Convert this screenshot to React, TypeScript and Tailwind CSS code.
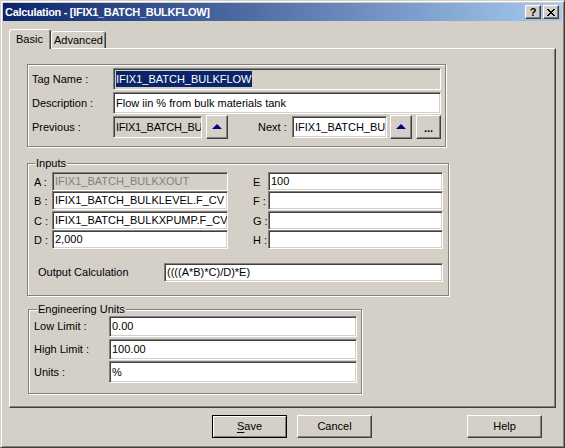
import React from "react";

const sunken =
  "border border-t-[#808080] border-l-[#808080] border-b-white border-r-white shadow-[inset_1px_1px_0_#404040,inset_-1px_-1px_0_#d4d0c8]";
const raised =
  "border border-t-white border-l-white border-b-[#404040] border-r-[#404040] shadow-[inset_-1px_-1px_0_#808080]";

function Field({
  w,
  h,
  value,
  disabled,
  className = "",
}: {
  w: string;
  h: string;
  value?: React.ReactNode;
  disabled?: boolean;
  className?: string;
}) {
  return (
    <div
      className={`${sunken} ${w} ${h} ${
        disabled ? "bg-[#d4d0c8] text-[#808080]" : "bg-white text-black"
      } flex items-center pl-[2px] overflow-hidden whitespace-nowrap shrink-0 ${className}`}
    >
      {value}
    </div>
  );
}

function UpButton({ className = "" }: { className?: string }) {
  return (
    <div
      className={`${raised} bg-[#d4d0c8] w-[22px] h-[24px] flex items-center justify-center shrink-0 ${className}`}
    >
      <svg width="10" height="5" viewBox="0 0 10 5" className="mb-[2px]">
        <polygon points="5,0 10,5 0,5" fill="#000080" />
      </svg>
    </div>
  );
}

function Group({
  label,
  labelLeft = "left-[7px]",
  className = "",
  children,
}: {
  label?: string;
  labelLeft?: string;
  className?: string;
  children: React.ReactNode;
}) {
  return (
    <div
      className={`relative border border-[#808080] shadow-[inset_1px_1px_0_#fff,1px_1px_0_#fff] shrink-0 ${className}`}
    >
      {label && (
        <span
          className={`absolute top-[-8px] ${labelLeft} bg-[#d4d0c8] px-[1px] leading-[14px]`}
        >
          {label}
        </span>
      )}
      {children}
    </div>
  );
}

function CloseGlyph() {
  const rows = [
    "XX....XX",
    ".XX..XX.",
    "..XXXX..",
    "...XX...",
    "..XXXX..",
    ".XX..XX.",
    "XX....XX",
  ];
  return (
    <svg width="8" height="7" viewBox="0 0 8 7" shapeRendering="crispEdges">
      {rows.flatMap((r, y) =>
        r.split("").map((c, x) =>
          c === "X" ? <rect key={`${x}-${y}`} x={x} y={y} width="1" height="1" fill="#000" /> : null
        )
      )}
    </svg>
  );
}

function PushButton({
  children,
  isDefault,
  className = "",
}: {
  children: React.ReactNode;
  isDefault?: boolean;
  className?: string;
}) {
  const cls = isDefault
    ? "border border-black shadow-[inset_1px_1px_0_#fff,inset_-1px_-1px_0_#808080]"
    : raised;
  return (
    <div
      className={`${cls} bg-[#d4d0c8] w-[75px] h-[23px] flex items-center justify-center shrink-0 ${className}`}
    >
      {children}
    </div>
  );
}

export default function App() {
  return (
    <div className="w-[565px] h-[448px] bg-[#d4d0c8] border border-t-[#d4d0c8] border-l-[#d4d0c8] border-b-[#404040] border-r-[#404040] shadow-[inset_1px_1px_0_#fff,inset_-1px_-1px_0_#808080] p-[2px] font-['Liberation_Sans',Arial,sans-serif] text-[11px] text-black leading-[13px] flex flex-col overflow-hidden select-none">
      {/* Title bar */}
      <div className="h-[18px] w-[559px] bg-[linear-gradient(to_right,#0a246a,#a6caf0)] flex items-center pl-[2px] pr-[3px] shrink-0">
        <span className="flex-1 text-white font-bold tracking-[-0.3px] whitespace-nowrap">
          Calculation - [IFIX1_BATCH_BULKFLOW]
        </span>
        <div className={`${raised} bg-[#d4d0c8] w-[16px] h-[14px] flex items-center justify-center mr-[2px] font-bold text-[11px] leading-[11px]`}>
          ?
        </div>
        <div className={`${raised} bg-[#d4d0c8] w-[16px] h-[14px] flex items-center justify-center`}>
          <CloseGlyph />
        </div>
      </div>

      {/* Tabs */}
      <div className="ml-[6px] mt-[8px] h-[20px] flex items-start shrink-0">
        <div className="relative z-10 w-[42px] h-[20px] bg-[#d4d0c8] border-t border-l border-r border-t-white border-l-white border-r-[#404040] shadow-[inset_-1px_0_0_#808080] rounded-t-[3px] flex items-center pl-[6px] pb-[1px]">
          Basic
        </div>
        <div className="mt-[2px] w-[55px] h-[17px] bg-[#d4d0c8] border-t border-l border-r border-t-white border-l-white border-r-[#404040] shadow-[inset_-1px_0_0_#808080] rounded-t-[3px] flex items-center pl-[2px] pt-[1px]">
          Advanced
        </div>
      </div>

      {/* Panel */}
      <div
        className={`ml-[6px] mt-[-1px] w-[547px] h-[360px] ${raised} bg-[#d4d0c8] flex flex-col shrink-0`}
      >
        {/* Tag group */}
        <Group className="ml-[17px] mt-[15px] w-[419px] h-[83px]">
          <div className="pt-[3px] pl-[4px] flex flex-col gap-[2px]">
            <div className="flex items-center h-[22px]">
              <span className="w-[81px] shrink-0">Tag Name :</span>
              <Field
                w="w-[328px]"
                h="h-[22px]"
                disabled
                value={
                  <span className="bg-[#0a246a] text-white h-[16px] leading-[16px] inline-block">
                    IFIX1_BATCH_BULKFLOW
                  </span>
                }
              />
            </div>
            <div className="flex items-center h-[22px]">
              <span className="w-[81px] shrink-0">Description :</span>
              <Field w="w-[328px]" h="h-[22px]" value="Flow iin % from bulk materials tank" />
            </div>
            <div className="flex items-center h-[22px]">
              <span className="w-[81px] shrink-0">Previous :</span>
              <Field
                w="w-[89px]"
                h="h-[22px]"
                disabled
                className="!text-black tracking-[-0.3px]"
                value="IFIX1_BATCH_BU"
              />
              <UpButton className="ml-[4px]" />
              <span className="ml-[30px] w-[34px] shrink-0">Next :</span>
              <Field w="w-[95px]" h="h-[22px]" value="IFIX1_BATCH_BU" />
              <UpButton className="ml-[3px]" />
              <div
                className={`${raised} bg-[#d4d0c8] ml-[4px] w-[25px] h-[24px] flex items-center justify-center font-bold pt-[2px] leading-[11px] shrink-0`}
              >
                ...
              </div>
            </div>
          </div>
        </Group>

        {/* Inputs group */}
        <Group label="Inputs" labelLeft="left-[7px]" className="ml-[17px] mt-[16px] w-[422px] h-[133px]">
          <div className="pt-[8px] pl-[6px] flex flex-col">
            {[
              ["A :", "IFIX1_BATCH_BULKXOUT", true, "E", "100", ""],
              ["B :", "IFIX1_BATCH_BULKLEVEL.F_CV", false, "F :", "", ""],
              ["C :", "IFIX1_BATCH_BULKXPUMP.F_CV", false, "G :", "", "mt-[1px]"],
              ["D :", "2,000", false, "H :", "", ""],
            ].map(([l, v, dis, l2, v2, mt]) => (
              <div key={l as string} className={`flex items-center h-[19px] ${mt}`}>
                <span className="w-[18px] shrink-0 pt-[2px]">{l}</span>
                <Field w="w-[176px]" h="h-[19px]" value={v as string} disabled={dis as boolean} />
                <span className="ml-[25px] w-[15px] shrink-0 pt-[2px]">{l2}</span>
                <Field w="w-[175px]" h="h-[19px]" value={v2 as string} />
              </div>
            ))}
            <div className="flex items-center h-[19px] mt-[14px]">
              <span className="ml-[4px] w-[126px] shrink-0">Output Calculation</span>
              <Field w="w-[279px]" h="h-[19px]" value="((((A*B)*C)/D)*E)" />
            </div>
          </div>
        </Group>

        {/* Engineering Units */}
        <Group
          label="Engineering Units"
          labelLeft="left-[8px]"
          className="ml-[18px] mt-[13px] w-[334px] h-[85px]"
        >
          <div className="pt-[6px] pl-[5px] flex flex-col">
            <div className="flex items-center h-[21px]">
              <span className="w-[75px] shrink-0">Low Limit :</span>
              <Field w="w-[248px]" h="h-[21px]" value="0.00" />
            </div>
            <div className="flex items-center h-[21px] mt-[2px]">
              <span className="w-[75px] shrink-0">High Limit :</span>
              <Field w="w-[248px]" h="h-[21px]" value="100.00" />
            </div>
            <div className="flex items-center h-[22px] mt-[1px]">
              <span className="w-[75px] shrink-0">Units :</span>
              <Field w="w-[248px]" h="h-[22px]" value="%" />
            </div>
          </div>
        </Group>
      </div>

      {/* Buttons */}
      <div className="flex mt-[7px] ml-[209px] shrink-0">
        <PushButton isDefault>
          <span>
            <span className="underline underline-offset-[2px]">S</span>ave
          </span>
        </PushButton>
        <PushButton className="ml-[10px]">Cancel</PushButton>
        <PushButton className="ml-[95px]">Help</PushButton>
      </div>
    </div>
  );
}
